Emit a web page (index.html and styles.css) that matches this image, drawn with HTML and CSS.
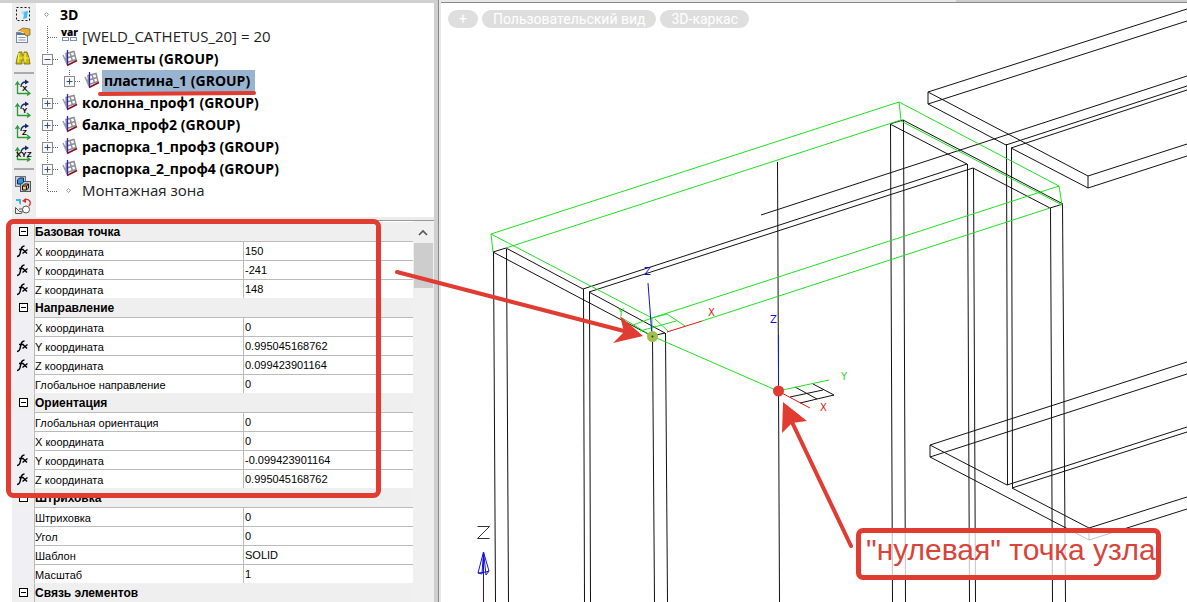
FILE: index.html
```html
<!DOCTYPE html>
<html lang="ru">
<head>
<meta charset="utf-8">
<title>3D</title>
<link rel="stylesheet" href="styles.css">
</head>
<body>
<svg class="defs" aria-hidden="true">
  <symbol id="bar" viewBox="0 0 22 22"><path class="dots" d="M11.500 0V22"/></symbol>
  <symbol id="tee" viewBox="0 0 22 22"><path class="dots" d="M11.500 0V22M12 11.500H22"/></symbol>
  <symbol id="end" viewBox="0 0 22 22"><path class="dots" d="M11.500 0V11.500H22"/></symbol>
  <symbol id="dot" viewBox="0 0 22 22"><path d="M10.500 8.500l2 2-2 2-2-2z" fill="#fff" stroke="#999"/></symbol>
  <symbol id="plus" viewBox="0 0 22 22"><path class="dots" d="M11.500 0V22M17 11.500H22"/><rect x="6.500" y="6.500" width="10" height="10" fill="#f8f8f8" stroke="#8b8b8b"/><path d="M8.500 11.500h6M11.500 8.500v6" stroke="#34508f"/></symbol>
  <symbol id="plus-last" viewBox="0 0 22 22"><path class="dots" d="M11.500 0V6M17 11.500H22"/><rect x="6.500" y="6.500" width="10" height="10" fill="#f8f8f8" stroke="#8b8b8b"/><path d="M8.500 11.500h6M11.500 8.500v6" stroke="#34508f"/></symbol>
  <symbol id="minus" viewBox="0 0 22 22"><path class="dots" d="M11.500 0V22M17 11.500H22"/><rect x="6.500" y="6.500" width="10" height="10" fill="#f8f8f8" stroke="#8b8b8b"/><path d="M8.500 11.500h6" stroke="#34508f"/></symbol>
  <symbol id="group" viewBox="0 0 22 22"><path d="M8 5.500l8-2 2 8-9 3zM12 4.500l2.500 8.500M7 10.500l10-3" fill="none" stroke="#8e8e92" stroke-width="1.500"/><path d="M5 7l4 9" stroke="#9a9a9e" stroke-width="1.500"/><path d="M9.500 2v15" stroke="#2a22c8" stroke-width="1.300"/><path d="M9 17.500L19 12.500" stroke="#8c1024" stroke-width="1.800"/></symbol>
  <symbol id="axes" viewBox="0 0 18 18"><path d="M3.500 4v11M3.500 14.500H15M1.500 6l2-3 2 3M13 12l3 2.500-3 2" fill="none" stroke="#2e9a35" stroke-width="1.300"/><path d="M7 8c0-4 2-5 5-5" fill="none" stroke="#18246e" stroke-width="1.300"/><path d="M11 .5l4 2.500-4 2.500z" fill="#18246e"/></symbol>
  <symbol id="fx" viewBox="0 0 14 14"><path d="M1 12.500c2.500 0 3-1.500 3.500-5S6 2 8.500 2M3 5.500h4.500" fill="none" stroke="#000" stroke-width="1.500"/><path d="M7 5.500l4 4M11.500 5.500L6.500 9.500" stroke="#000" stroke-width="1.400"/></symbol>
  <symbol id="fold" viewBox="0 0 9 9"><rect x=".5" y=".5" width="8" height="8" fill="#fff" stroke="#000"/><path d="M2 4.500h5" stroke="#000"/></symbol>
</svg>

<div class="app">
  <aside class="side">
    <div class="upper">
      <nav class="tools" aria-label="Инструменты">
        <button aria-label="Выбор"><svg viewBox="0 0 18 18"><rect x="2.500" y="2.500" width="13" height="13" fill="none" stroke="#111" stroke-dasharray="2 2"/><path d="M7 7l7-1-1 7-4 1 1-4z" fill="#48bdf0"/><path d="M7 7l4-1-2 4z" fill="#a9e3fa"/></svg></button>
        <button aria-label="Свойства"><svg viewBox="0 0 18 18"><rect x="2.500" y="5.500" width="11" height="10" fill="#f4f7fb" stroke="#7889a5"/><path d="M3 7h10" stroke="#58749d" stroke-width="2"/><path d="M4.500 10.500h7M4.500 13h7" stroke="#8a95a8"/><path d="M4 4l5-3 7 1v6l-4 1-2-3z" fill="#e2ae39" stroke="#79571c" stroke-width=".7"/><path d="M4 4l6 2" stroke="#fff3bd"/></svg></button>
        <button aria-label="Поиск"><svg viewBox="0 0 18 18"><path d="M5 3h3v3h2V3h3l2 6 1 6h-6v-4H8v4H2l1-6z" fill="#cbbd12" stroke="#6c6400" stroke-width=".8"/><path d="M5 4L4 13M11 4v9M4 9h4M11 9h4" stroke="#fff25a" stroke-width="1.200"/></svg></button>
        <hr>
        <button aria-label="Поворот X"><svg viewBox="0 0 18 18"><use href="#axes"/><text x="8" y="12" class="axis">X</text></svg></button>
        <button aria-label="Поворот Y"><svg viewBox="0 0 18 18"><use href="#axes"/><text x="8" y="12" class="axis">Y</text></svg></button>
        <button aria-label="Поворот Z"><svg viewBox="0 0 18 18"><use href="#axes"/><text x="8" y="12" class="axis">Z</text></svg></button>
        <button aria-label="Поворот XYZ"><svg viewBox="0 0 18 18"><use href="#axes"/><text x="2" y="12" class="axis">XYZ</text></svg></button>
        <hr>
        <button aria-label="Копировать"><svg viewBox="0 0 18 18"><rect x="1.500" y="1.500" width="10" height="10" fill="#c7ccd4" stroke="#69717d"/><rect x="6.500" y="6.500" width="10" height="10" fill="#c7ccd4" stroke="#4e5661"/><path d="M3.500 5l2-2h4v4l-2 2h-4z" fill="#3b91d9" stroke="#102c52"/><path d="M8.500 11l2-2h4v4l-2 2h-4z" fill="#f4c663" stroke="#111"/><path d="M8.500 11h4v4M12.500 11l2-2" fill="none" stroke="#111"/></svg></button>
        <button aria-label="Заменить"><svg viewBox="0 0 18 18"><path d="M2 2h5v6L5 6V4H2z" fill="#35b6ed"/><path d="M1.500 16.500v-6l4 4h2M1.500 16.500h6l2-6 3 1M5 12h3" fill="none" stroke="#555"/><circle cx="12" cy="12.500" r="3.500" fill="#fff" stroke="#555"/><path d="M10 3c5-2 8 2 5 6" fill="none" stroke="#e22c27" stroke-width="1.300"/><path d="M8 4l4-3v5z" fill="#e22c27"/></svg></button>
      </nav>
      <ul class="tree">
        <li><svg><use href="#dot"/></svg><b>3D</b></li>
        <li><svg><use href="#tee"/></svg><svg viewBox="0 0 22 22"><text x="3" y="10" class="var">var</text><rect x="4.500" y="11.500" width="6" height="3" fill="#fff" stroke="#7d8fb0"/><rect x="12.500" y="11.500" width="6" height="3" fill="#fff" stroke="#7d8fb0"/></svg><span>[WELD_CATHETUS_20] = 20</span></li>
        <li><button aria-label="Свернуть"><svg><use href="#minus"/></svg></button><svg><use href="#group"/></svg><b>элементы (GROUP)</b></li>
        <li><svg><use href="#bar"/></svg><button aria-label="Развернуть"><svg><use href="#plus-last"/></svg></button><svg><use href="#group"/></svg><b class="selected">пластина_1 (GROUP)</b></li>
        <li><button aria-label="Развернуть"><svg><use href="#plus"/></svg></button><svg><use href="#group"/></svg><b>колонна_проф1 (GROUP)</b></li>
        <li><button aria-label="Развернуть"><svg><use href="#plus"/></svg></button><svg><use href="#group"/></svg><b>балка_проф2 (GROUP)</b></li>
        <li><button aria-label="Развернуть"><svg><use href="#plus"/></svg></button><svg><use href="#group"/></svg><b>распорка_1_проф3 (GROUP)</b></li>
        <li><button aria-label="Развернуть"><svg><use href="#plus"/></svg></button><svg><use href="#group"/></svg><b>распорка_2_проф4 (GROUP)</b></li>
        <li><svg><use href="#end"/></svg><svg><use href="#dot"/></svg><span>Монтажная зона</span></li>
      </ul>
    </div>
    <div class="lower">
      <table class="props">
        <colgroup><col class="gutter"><col class="name"><col></colgroup>
        <tbody>
        <tr class="head"><td><button aria-label="Свернуть"><svg><use href="#fold"/></svg></button></td><th colspan="2">Базовая точка</th></tr>
        <tr><td><svg><use href="#fx"/></svg></td><th>X координата</th><td>150</td></tr>
        <tr><td><svg><use href="#fx"/></svg></td><th>Y координата</th><td>-241</td></tr>
        <tr><td><svg><use href="#fx"/></svg></td><th>Z координата</th><td>148</td></tr>
        <tr class="head"><td><button aria-label="Свернуть"><svg><use href="#fold"/></svg></button></td><th colspan="2">Направление</th></tr>
        <tr><td></td><th>X координата</th><td>0</td></tr>
        <tr><td><svg><use href="#fx"/></svg></td><th>Y координата</th><td>0.995045168762</td></tr>
        <tr><td><svg><use href="#fx"/></svg></td><th>Z координата</th><td>0.099423901164</td></tr>
        <tr><td></td><th>Глобальное направление</th><td>0</td></tr>
        <tr class="head"><td><button aria-label="Свернуть"><svg><use href="#fold"/></svg></button></td><th colspan="2">Ориентация</th></tr>
        <tr><td></td><th>Глобальная ориентация</th><td>0</td></tr>
        <tr><td></td><th>X координата</th><td>0</td></tr>
        <tr><td><svg><use href="#fx"/></svg></td><th>Y координата</th><td>-0.099423901164</td></tr>
        <tr><td><svg><use href="#fx"/></svg></td><th>Z координата</th><td>0.995045168762</td></tr>
        <tr class="head"><td><button aria-label="Свернуть"><svg><use href="#fold"/></svg></button></td><th colspan="2">Штриховка</th></tr>
        <tr><td></td><th>Штриховка</th><td>0</td></tr>
        <tr><td></td><th>Угол</th><td>0</td></tr>
        <tr><td></td><th>Шаблон</th><td>SOLID</td></tr>
        <tr><td></td><th>Масштаб</th><td>1</td></tr>
        <tr class="head"><td><button aria-label="Свернуть"><svg><use href="#fold"/></svg></button></td><th colspan="2">Связь элементов</th></tr>
        </tbody>
      </table>
      <div class="scroll">
        <button aria-label="Вверх"><svg viewBox="0 0 10 7"><path d="M1 6l4-4 4 4" fill="none" stroke="#555" stroke-width="1.600"/></svg></button>
        <div class="thumb"></div>
      </div>
    </div>
  </aside>
  <div class="splitter"></div>
  <main class="view">
    <div class="tabs"></div>
    <div class="pills">
      <button>+</button><button>Пользовательский вид</button><button>3D-каркас</button>
    </div>
  </main>

  <svg class="scene" aria-label="3D-каркас">
    <g class="black">
      <path d="M493.500 252L495.500 602M506.500 249L508.500 602M583.500 289L584.500 602M589.500 292L590.500 602M652.500 336L654.500 602M665.500 333L667.500 602M777.500 162L779.500 602M890.500 124L892.500 602M903.500 120L905.500 602M967.500 164L969.500 602M973.500 168L975.500 602M1050.500 208L1052.500 602M1062.500 204L1065.500 602M1006.500 144L1007.500 485M1011.500 148L1012.500 488"/>
      <path d="M652 336L493 252L506 248L583 289L967 164L890 124L903 120L1063 204L1050 208L973 168L589 292L665 333L652 336"/>
      <path d="M761 215L1187 76M1187 86L1006 145L928 104V92L1187 9M928 104L1187 21M928 92L1088 176V188L1011 148L1187 90M1088 176L1187 144M1088 188L1187 156"/>
      <path d="M1187 362L930 445V457L1187 374M930 445L1007 485L1187 427M930 457L1089 540L1187 509M1187 432L1012 488L1089 528V540M1089 528L1187 497"/>
      <path d="M790 397L823 390M800 403L834 395L813 384M795 387L817 399"/>
    </g>
    <g class="green">
      <path d="M493 252L491 234L899 102L1059 186L652 318L491 234M506 248L901 120L899 102M901 121L1062 205L1059 186M1050 208L702 321M652 318V336L778 391L829 380"/>
      <path d="M652 318L667 314L685 326M640 331L676 321M633 325L652 318M655 319L668 331M652 336L622 318"/>
      <text x="618" y="316">Y</text><text x="841" y="380">Y</text>
    </g>
    <g class="blue">
      <path d="M652 336L648 283M778.500 391V335M483.500 602V552L478 573L482 574L483.500 552L486 575L489 571L483.500 552M478 573L486 572L489 571"/>
      <text x="644" y="275">Z</text><text x="770" y="323">Z</text>
    </g>
    <g class="red">
      <path d="M667 332L702 321M778 391L810 408"/>
      <text x="708" y="316">X</text><text x="820" y="411">X</text>
    </g>
    <path d="M477.500 526.500H489.500L477.500 538.500H489.500" fill="none" stroke="#333"/>
    <circle cx="652.500" cy="336.500" r="5.500" fill="#a0c04d"/><circle cx="652.500" cy="336.500" r="1" fill="#333"/>
    <circle cx="778.500" cy="391" r="5.500" fill="#e03c31"/>
  </svg>
  <svg class="marks" aria-hidden="true">
    <rect x="8.500" y="221.500" width="370" height="274" rx="5"/>
    <path class="line" d="M100 94L254 93M397 272L624 331M791 420L851 546"/>
    <path class="tip" d="M643 336L613 343L624 332L620 316zM783 402L807 421L792 423L782 433z"/>
  </svg>
  <div class="callout">"нулевая" точка узла</div>
</div>
</body>
</html>
```
FILE: styles.css
```css
* { box-sizing: border-box; }
body { margin: 0; font-family: "Liberation Sans", Arial, sans-serif; color: #000; background: #fff; }
button { border: 0; padding: 0; background: none; font: inherit; color: inherit; display: block; }
svg { display: block; }
.defs { position: absolute; width: 0; height: 0; }
.dots { fill: none; stroke: #666; stroke-dasharray: 1 1; }

.app { position: relative; display: flex; height: 100vh; overflow: hidden; }
.side { flex: 0 0 434px; display: flex; flex-direction: column; padding-left: 12px; border-top: 3px solid #d0d0d0; }
.upper { display: flex; background: #fff; border-bottom: 3px solid #ececec; }
.tools { width: 24px; height: 214px; background: #eee; }
.tools button { width: 22px; height: 22px; padding: 2px; }
.tools svg { width: 18px; height: 18px; }
.tools hr { margin: 3px 2px; border: 0; border-top: 2px solid #aaa; }
.axis { font: bold 8px "Liberation Sans", sans-serif; }
.var { font: 800 10px "Open Sans", sans-serif; }

.tree { flex: 1; margin: 0; padding: 1px 0 0; list-style: none; font: 15px/22px "Open Sans", sans-serif; white-space: nowrap; }
.tree li { display: flex; height: 22px; }
.tree svg { width: 22px; height: 22px; flex: none; }
.tree b, .tree span { padding: 0 2px; }
.tree b { font-size: 14px; }
.tree span { color: #222; line-height: 20px; }
.tree .selected { padding-right: 5px; background: #99b4d1; }

.lower { flex: 1; display: flex; min-height: 0; border-top: 1px solid #999; overflow: hidden; align-items: flex-start; }
.props { flex: 1; margin-top: 1px; table-layout: fixed; border-spacing: 0; font-size: 11px; line-height: 18px; }
.props col.gutter { width: 22px; }
.props col.name { width: 209px; }
.props tr { height: 19px; }
.props th, .props td { height: 19px; padding: 0; border-top: 1px solid #bbb; text-align: left; font-weight: normal; overflow: hidden; white-space: nowrap; }
.props th { padding: 2px 0 0; line-height: 16px; border-left: 1px solid #bbb; }
.props td:last-child { padding-left: 1px; border-left: 1px solid #bbb; }
.props td:first-child { background: #f0f0f4; border-top: 0; }
.props .head td, .props .head th { background: #efefef; border-top-color: #efefef; }
.props .head th { padding-top: 0; font-weight: bold; font-size: 12px; }
.props td svg { width: 14px; height: 14px; margin-left: 4px; }
.props .head svg { width: 9px; height: 9px; margin-left: 7px; }
.scroll { width: 21px; align-self: stretch; background: #f0f0f0; }
.scroll button { display: grid; place-items: center; width: 20px; height: 22px; }
.scroll svg { width: 10px; height: 7px; }
.thumb { height: 45px; margin: 0 1px; background: #cdcdcd; }

.splitter { flex: 0 0 7px; background: linear-gradient(90deg, #cfcfcf 4px, #888 4px, #888 5px, #e8e8e8 5px); }
.view { flex: 1; min-width: 0; background: #fff; }
.tabs { height: 3px; border-bottom: 1px solid #888; background: linear-gradient(90deg, #e8e8e8 69%, #ccc 69%); }
.pills { display: flex; gap: 4px; padding: 7px; font: 14px/18px Roboto, sans-serif; color: #fff; }
.pills button { height: 18px; padding: 0 11px; border-radius: 9px; background: #dedede; white-space: nowrap; }

.scene, .marks { position: absolute; inset: 0; width: 100%; height: 100%; pointer-events: none; }
.scene path { fill: none; stroke-width: 1px; }
.scene text { font: 10px "DejaVu Sans", sans-serif; stroke: none; }
.black { stroke: #111; }
.green { stroke: #1fe01f; }
.blue { stroke: #1414d0; }
.red { stroke: #e01414; }
.green text { fill: #1fe01f; }
.blue text { fill: #1414d0; }
.red text { fill: #e01414; }
.marks { fill: none; stroke: #e03c31; stroke-width: 5px; stroke-linecap: round; }
.marks .line { stroke-width: 4px; }
.marks .tip { fill: #e03c31; stroke: none; }
.callout { position: absolute; left: 856px; top: 528px; padding: 2px 0 10px 5px; border: 5px solid #e03c31; border-radius: 7px; background: rgba(255, 255, 255, 0.75); color: #d9443a; font-size: 30px; line-height: 30px; white-space: nowrap; }
```
